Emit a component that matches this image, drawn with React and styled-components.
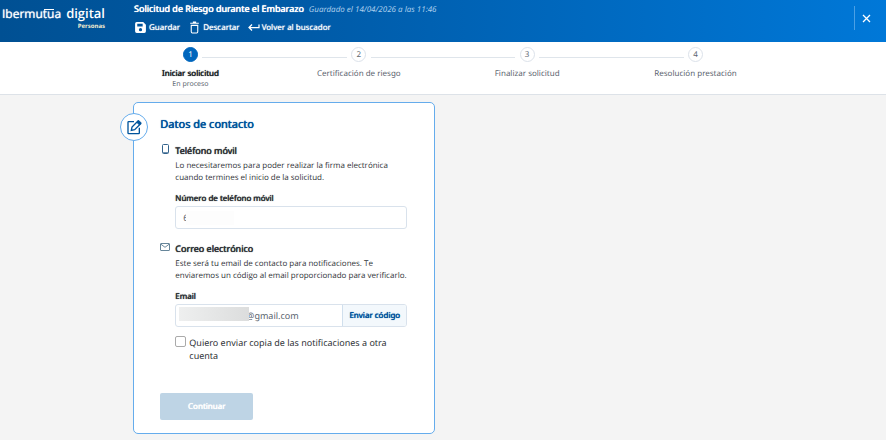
import React from "react";
import styled, { createGlobalStyle, css } from "styled-components";

const Global = createGlobalStyle`
  * { box-sizing: border-box; }
  body { margin: 0; background: #f4f4f4; color: #2f3337; font-family: "Noto Sans", sans-serif; font-size: 8px; text-rendering: geometricPrecision; }
  button, input { font: inherit; color: inherit; text-rendering: inherit; }
  h1, h2, h3, p, ol { margin: 0; padding: 0; font: inherit; }
`;

const strong = css`
  font-weight: 400;
  text-shadow: 0 0 1px currentColor, 0 0 0 currentColor;
`;

const Page = styled.div`
  min-height: 100vh;
  background: #f4f4f4;
`;

const Header = styled.header`
  display: flex;
  align-items: flex-start;
  height: 42px;
  color: #fff;
  background: linear-gradient(90deg, #005093 0%, #005ba8 35%, #0078d8 100%);
`;

const Brand = styled.div`
  flex: none;
  width: 134px;
  padding: 5px 29px 0 2px;
`;

const Logo = styled.div`
  display: flex;
  justify-content: space-between;
  line-height: 17px;
`;

const LogoName = styled.span`
  font-family: "Open Sans", "Noto Sans", sans-serif;
  font-size: 12px;
  text-shadow: 0 0 1px currentColor;
`;

const Ligature = styled.span`
  background: linear-gradient(#fff, #fff) 1px 4px / 100% 1px no-repeat;
`;

const LogoWord = styled.span`
  font-family: "Open Sans", "Noto Sans", sans-serif;
  font-size: 13px;
  font-weight: 600;
`;

const LogoArea = styled.div`
  font-size: 6px;
  font-weight: 700;
  line-height: 8px;
  text-align: right;
  color: #f3ecd0;
`;

const HeaderMain = styled.div`
  flex: 1;
  padding-top: 2px;
`;

const TitleRow = styled.div`
  display: flex;
  align-items: baseline;
  gap: 5px;
  line-height: 14px;
`;

const Title = styled.h1`
  font-size: 9px;
  ${strong}
`;

const Saved = styled.span`
  font-size: 8px;
  font-style: italic;
  color: #a9cdec;
`;

const Actions = styled.div`
  display: flex;
  gap: 8px;
  margin-top: 3px;
`;

const Action = styled.button`
  display: flex;
  align-items: center;
  gap: 2px;
  height: 14px;
  padding: 0;
  border: 0;
  background: none;
  font-size: 8px;
  text-shadow: 0 0 1px currentColor;
`;

const Close = styled.button`
  display: flex;
  align-items: center;
  justify-content: center;
  width: 24px;
  height: 24px;
  margin: 6px 8px 0 0;
  padding: 0;
  border: 0;
  border-left: 1px solid #4ba0e5;
  background: none;
`;

const StepBar = styled.nav`
  display: flex;
  justify-content: center;
  height: 53px;
  padding-top: 5px;
  background: #fff;
  border-bottom: 1px solid #dde2e8;
`;

const Steps = styled.ol`
  display: grid;
  grid-template-columns: repeat(4, 1fr);
  width: 76%;
  list-style: none;
`;

const Step = styled.li`
  position: relative;
  display: flex;
  flex-direction: column;
  align-items: center;
  color: #5d6670;

  &:not(:last-child)::after {
    content: "";
    position: absolute;
    top: 10px;
    left: calc(50% + 12px);
    right: calc(-50% + 12px);
    height: 1px;
    background: #dfe5eb;
  }
`;

const StepNumber = styled.span`
  display: grid;
  place-items: center;
  width: 15px;
  height: 15px;
  border: 1px solid ${(p) => (p.$active ? "#0066bd" : "#dce2ea")};
  border-radius: 50%;
  background: ${(p) => (p.$active ? "#0066bd" : "#fff")};
  color: ${(p) => (p.$active ? "#fff" : "#5d6670")};
  font-size: 8px;
  line-height: 12px;
`;

const StepLabel = styled.span`
  margin-top: 6px;
  font-size: 8px;
  line-height: 12px;
  color: #5d6670;
  ${(p) => p.$active && strong}
  ${(p) => p.$active && "color: #23272b;"}
`;

const StepStatus = styled.span`
  font-size: 7px;
  line-height: 9px;
`;

const Content = styled.main`
  width: 76%;
  margin: 0 auto;
  padding: 7px 0 6px 27px;
`;

const Card = styled.form`
  position: relative;
  max-width: 302px;
  padding: 14px 27px 13px 26px;
  border: 1px solid #65acec;
  border-radius: 5px;
  background: #fff;
`;

const CardBadge = styled.span`
  position: absolute;
  top: 10px;
  left: -14px;
  display: grid;
  place-items: center;
  width: 28px;
  height: 28px;
  border: 1px solid #65acec;
  border-radius: 50%;
  background: #fff;
`;

const CardTitle = styled.h2`
  font-size: 11px;
  line-height: 16px;
  color: #00549c;
  ${strong}
`;

const Section = styled.section`
  margin-top: ${(p) => (p.$first ? 10 : 12)}px;
  padding-left: 15px;
`;

const SectionHead = styled.div`
  display: flex;
  gap: 5px;
  margin-left: -15px;
`;

const IconSlot = styled.span`
  display: grid;
  flex: none;
  place-items: center;
  width: 10px;
  height: 12px;
`;

const SectionTitle = styled.h3`
  font-size: 9px;
  line-height: 15px;
  ${strong}
`;

const Hint = styled.p`
  margin-top: 2px;
  font-family: "Open Sans", "Noto Sans", sans-serif;
  font-size: 8px;
  line-height: 12px;
`;

const Label = styled.label`
  display: block;
  margin: 9px 0 1px;
  font-size: 8px;
  line-height: 12px;
  ${strong}
`;

const Field = styled.div`
  position: relative;
  display: flex;
  height: 23px;
  border: 1px solid #d9e2ec;
  border-radius: 3px;
  overflow: hidden;
`;

const TextInput = styled.input`
  flex: 1;
  min-width: 0;
  padding: 0 0 0 ${(p) => (p.$masked ? 70 : 7)}px;
  border: 0;
  outline: 0;
  background: transparent;
  color: #59636e;
  font-size: 9px;
`;

const Mask = styled.span`
  position: absolute;
  top: ${(p) => (p.$light ? 4 : 2)}px;
  left: ${(p) => (p.$light ? 10 : 3)}px;
  width: ${(p) => (p.$light ? 48 : 70)}px;
  height: 14px;
  background: ${(p) => (p.$light ? "#fdfdfd" : "linear-gradient(90deg, #eeefef, #dcdddd)")};
`;

const SendCode = styled.button`
  flex: none;
  width: 64px;
  padding: 0;
  border: 0;
  border-left: 1px solid #d0dfed;
  background: #f3f8fc;
  color: #00549c;
  font-size: 8px;
  ${strong}
`;

const CheckRow = styled.label`
  display: flex;
  gap: 3px;
  margin-top: 9px;
  font-size: 9px;
  line-height: 13px;
`;

const CheckBox = styled.input`
  flex: none;
  appearance: none;
  width: 11px;
  height: 11px;
  margin: 0;
  border: 1px solid #aaa;
  border-radius: 2px;
  background: #fff;
`;

const Submit = styled.button`
  display: block;
  width: 93px;
  height: 27px;
  margin-top: 31px;
  border: 0;
  border-radius: 2px;
  background: #bed4e5;
  color: #fff;
  font-size: 8px;
  ${strong}
`;

const SaveIcon = () => (
  <svg width="13" height="13" viewBox="0 0 24 24" fill="#fff">
    <path fillRule="evenodd" d="M5 2h12l5 5v12a3 3 0 0 1-3 3H5a3 3 0 0 1-3-3V5a3 3 0 0 1 3-3Zm1 3v5h10V5H6Zm6 8a3 3 0 1 0 0 6 3 3 0 0 0 0-6Z" />
  </svg>
);
const TrashIcon = () => (
  <svg width="13" height="13" viewBox="0 0 24 24" fill="none" stroke="#fff" strokeWidth="2">
    <path d="M4 4h16M9 2h6M6 8h12v12a2 2 0 0 1-2 2H8a2 2 0 0 1-2-2Z" />
  </svg>
);
const ReturnIcon = () => (
  <svg width="12" height="12" viewBox="0 0 24 24" fill="none" stroke="#fff" strokeWidth="2.5">
    <path d="M22 7v6H3M8 7l-6 6 6 6" />
  </svg>
);
const CloseIcon = () => (
  <svg width="9" height="9" viewBox="0 0 9 9" fill="none" stroke="#fff" strokeWidth="1.3">
    <path d="M1 1l7 7M8 1L1 8" />
  </svg>
);
const EditIcon = () => (
  <svg width="16" height="16" viewBox="0 0 24 24" fill="none" stroke="#00549c" strokeWidth="2">
    <path d="M12 4H4a1 1 0 0 0-1 1v16a1 1 0 0 0 1 1h15a1 1 0 0 0 1-1v-8" />
    <path d="M8 17l1-5 9-9 4 4-9 9Z" />
    <path d="M16 5l3-3 4 4-3 3Z" fill="#00549c" strokeWidth="1" />
  </svg>
);
const PhoneIcon = () => (
  <svg width="7" height="10" viewBox="0 0 7 10" fill="none" stroke="#33638c">
    <rect x=".5" y=".5" width="6" height="9" rx="1" />
    <path d="M1 8.5h5" strokeWidth=".7" />
  </svg>
);
const MailIcon = () => (
  <svg width="10" height="8" viewBox="0 0 10 8" fill="none" stroke="#56788f" strokeWidth=".9">
    <rect x=".5" y=".5" width="9" height="7" rx=".5" />
    <path d="M1 1.3l4 3 4-3" />
  </svg>
);

const STEPS = [
  { label: "Iniciar solicitud", status: "En proceso" },
  { label: "Certificación de riesgo" },
  { label: "Finalizar solicitud" },
  { label: "Resolución prestación" },
];

export default function App() {
  return (
    <Page>
      <Global />
      <Header>
        <Brand>
          <Logo>
            <LogoName>Ibermu<Ligature>tu</Ligature>a</LogoName>
            <LogoWord>digital</LogoWord>
          </Logo>
          <LogoArea>Personas</LogoArea>
        </Brand>
        <HeaderMain>
          <TitleRow>
            <Title>Solicitud de Riesgo durante el Embarazo</Title>
            <Saved>Guardado el 14/04/2026 a las 11:46</Saved>
          </TitleRow>
          <Actions>
            <Action type="button"><SaveIcon />Guardar</Action>
            <Action type="button"><TrashIcon />Descartar</Action>
            <Action type="button"><ReturnIcon />Volver al buscador</Action>
          </Actions>
        </HeaderMain>
        <Close type="button" aria-label="Cerrar"><CloseIcon /></Close>
      </Header>
      <StepBar>
        <Steps>
          {STEPS.map((step, i) => (
            <Step key={step.label}>
              <StepNumber $active={i === 0}>{i + 1}</StepNumber>
              <StepLabel $active={i === 0}>{step.label}</StepLabel>
              {step.status && <StepStatus>{step.status}</StepStatus>}
            </Step>
          ))}
        </Steps>
      </StepBar>
      <Content>
        <Card>
          <CardBadge><EditIcon /></CardBadge>
          <CardTitle>Datos de contacto</CardTitle>
          <Section $first>
            <SectionHead>
              <IconSlot><PhoneIcon /></IconSlot>
              <SectionTitle>Teléfono móvil</SectionTitle>
            </SectionHead>
            <Hint>Lo necesitaremos para poder realizar la firma electrónica cuando termines el inicio de la solicitud.</Hint>
            <Label htmlFor="phone">Número de teléfono móvil</Label>
            <Field>
              <TextInput id="phone" type="tel" defaultValue="6" />
              <Mask $light />
            </Field>
          </Section>
          <Section>
            <SectionHead>
              <IconSlot><MailIcon /></IconSlot>
              <SectionTitle>Correo electrónico</SectionTitle>
            </SectionHead>
            <Hint>Este será tu email de contacto para notificaciones. Te enviaremos un código al email proporcionado para verificarlo.</Hint>
            <Label htmlFor="email">Email</Label>
            <Field>
              <TextInput id="email" type="text" $masked defaultValue="@gmail.com" />
              <Mask />
              <SendCode type="button">Enviar código</SendCode>
            </Field>
            <CheckRow>
              <CheckBox type="checkbox" />
              <span>Quiero enviar copia de las notificaciones a otra cuenta</span>
            </CheckRow>
          </Section>
          <Submit type="submit" disabled>Continuar</Submit>
        </Card>
      </Content>
    </Page>
  );
}
